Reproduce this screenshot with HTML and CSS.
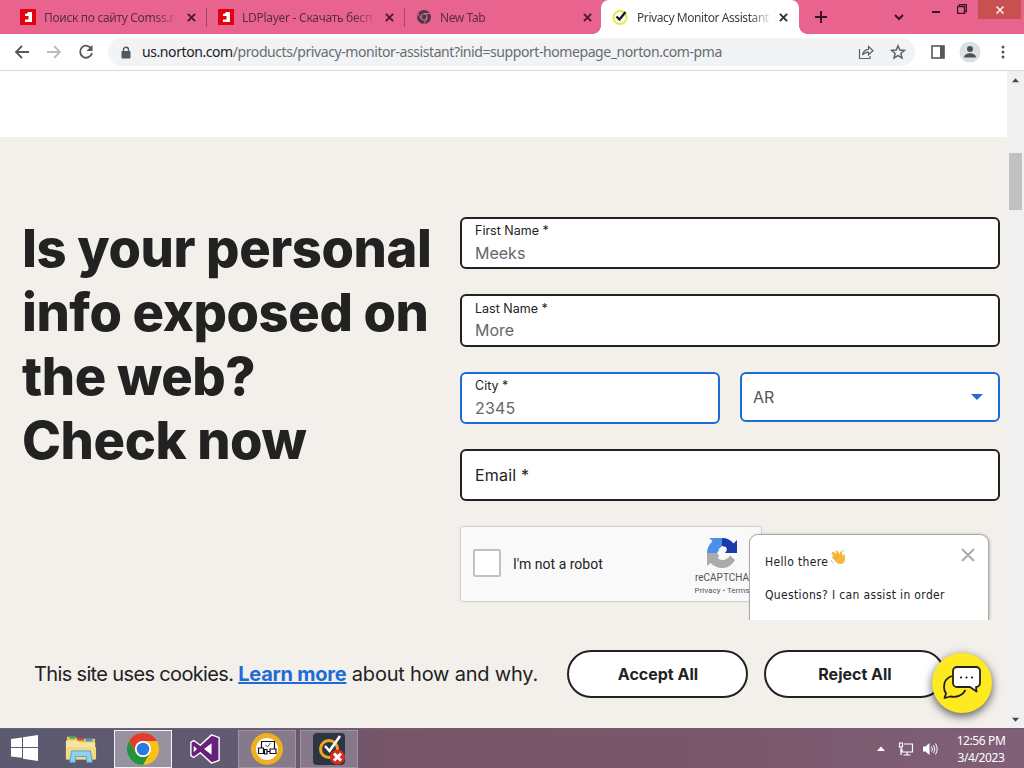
FILE: index.html
```
<!DOCTYPE html>
<html lang="en">
<head>
    <meta charset="UTF-8">
    <title>Privacy Monitor Assistant</title>
    <link rel="stylesheet" href="styles.css">
</head>
<body>
    <div class="tabs">
        <div class="tab">
            <svg class="favicon" viewBox="0 0 16 16"><rect width="16" height="16" fill="#e3000f"/><path d="M8 3h4v10H5v-2.500h3.500V7H5V5q2.500 0 3-2z" fill="#fff"/></svg>
            <span class="tab-title t1">Поиск по сайту Comss.r</span>
            <svg class="tab-close" viewBox="0 0 10 10"><path d="M1 1l8 8M9 1l-8 8"/></svg>
        </div>
        <div class="tab">
            <svg class="favicon" viewBox="0 0 16 16"><rect width="16" height="16" fill="#e3000f"/><path d="M8 3h4v10H5v-2.500h3.500V7H5V5q2.500 0 3-2z" fill="#fff"/></svg>
            <span class="tab-title t2">LDPlayer - Скачать бесп</span>
            <svg class="tab-close" viewBox="0 0 10 10"><path d="M1 1l8 8M9 1l-8 8"/></svg>
        </div>
        <div class="tab last">
            <svg class="favicon" viewBox="0 0 16 16"><circle cx="8" cy="8" r="7" fill="#4b3a48"/><path d="M8 4.500h6.500M5 9.700L1.800 4.300M11 9.700L7.800 15" stroke="#e8648f" stroke-width="1"/><circle cx="8" cy="8" r="3" fill="#4b3a48" stroke="#e8648f" stroke-width="1.200"/></svg>
            <span class="tab-title t3">New Tab</span>
            <svg class="tab-close" viewBox="0 0 10 10"><path d="M1 1l8 8M9 1l-8 8"/></svg>
        </div>
        <div class="tab active">
            <svg class="favicon" viewBox="0 0 16 16"><circle cx="8" cy="8.500" r="6.500" fill="#fff" stroke="#e3ea3c" stroke-width="2"/><path d="M4.500 7.500l3 3L13.500 3" fill="none" stroke="#1c1c1c" stroke-width="2.400"/></svg>
            <span class="tab-title t4">Privacy Monitor Assistant</span>
            <svg class="tab-close" viewBox="0 0 10 10"><path d="M1 1l8 8M9 1l-8 8"/></svg>
        </div>
        <svg class="new-tab" viewBox="0 0 12 12"><path d="M6 0v12M0 6h12"/></svg>
        <div class="window-buttons">
            <svg class="chevron" viewBox="0 0 10 8"><path d="M1 2l4 4 4-4"/></svg>
            <svg class="minimize" viewBox="0 0 8 12"><path d="M0 11h8"/></svg>
            <svg class="restore" viewBox="0 0 10 10"><path d="M.5 2.500h7v7h-7zM2.500 2V.5h7v7H8"/></svg>
            <div class="close-window"><svg viewBox="0 0 8 8"><path d="M.5.5l7 7M7.500.5l-7 7"/></svg></div>
        </div>
    </div>

    <div class="toolbar">
        <svg class="nav" viewBox="0 0 16 16"><path d="M15 8H2M8 2L2 8l6 6"/></svg>
        <svg class="nav disabled" viewBox="0 0 16 16"><path d="M1 8h13M8 2l6 6-6 6"/></svg>
        <svg class="nav" viewBox="0 0 16 16"><path d="M13.500 5A6 6 0 1 0 14 9"/><path d="M14.500 1v6h-6z" fill="#54585c" stroke="none"/></svg>
        <div class="address">
            <svg class="lock" viewBox="0 0 10 12"><path d="M2.500 5V3.300a2.500 2.500 0 0 1 5 0V5" fill="none" stroke="#54585c" stroke-width="1.400"/><rect x=".5" y="4.500" width="9" height="7.500" rx="1" fill="#54585c"/></svg>
            <span class="url"><b>us.norton.com</b>/products/privacy-monitor-assistant?inid=support-homepage_norton.com-pma</span>
            <svg class="share" viewBox="0 0 16 16"><path d="M1.500 5v9.500h10.500V12"/><path d="M4.500 11C5 7.500 7.500 5.500 10.500 5.300V2.500L15 6.800l-4.500 4V8.200C8 8.200 6 9 4.500 11z"/></svg>
            <svg class="star" viewBox="0 0 16 16"><path d="M8 1.800l1.800 4.200 4.600.4-3.500 3 1.100 4.500L8 11.500 4 13.900l1.100-4.500-3.500-3 4.600-.4z"/></svg>
        </div>
        <svg class="panel" viewBox="0 0 14 14"><rect x="1" y="1" width="12" height="12" fill="none" stroke="#54585c" stroke-width="1.600"/><path d="M9 1h4v12H9z" fill="#54585c"/></svg>
        <svg class="profile" viewBox="0 0 22 22"><circle cx="11" cy="11" r="10.500" fill="#dbe0e4"/><circle cx="11" cy="8" r="3" fill="#4d5156"/><path d="M5 16.500c0-3 4-4.200 6-4.200s6 1.200 6 4.200z" fill="#4d5156"/></svg>
        <svg class="dots" viewBox="0 0 4 14"><circle cx="2" cy="2" r="1.500"/><circle cx="2" cy="7" r="1.500"/><circle cx="2" cy="12" r="1.500"/></svg>
    </div>

    <div class="viewport">
        <div class="page">
            <div class="top-space"></div>
            <div class="hero">
                <h1>Is your personal<br>info exposed on<br>the web?<br>Check now</h1>
                <div class="form">
                    <div class="field"><label>First Name *</label><span class="value">Meeks</span></div>
                    <div class="field tall"><label>Last Name *</label><span class="value">More</span></div>
                    <div class="row">
                        <div class="field blue"><label>City *</label><span class="value city">2345</span></div>
                        <div class="field blue select"><span>AR</span><svg viewBox="0 0 12 6"><path d="M0 0h12L6 6z" fill="#1f6bd6"/></svg></div>
                    </div>
                    <div class="field email"><span>Email *</span></div>
                    <div class="captcha">
                        <span class="checkbox"></span>
                        <span class="robot">I'm not a robot</span>
                        <div class="captcha-logo">
                            <svg viewBox="0 0 32 32">
                                <path d="M16 1A15 15 0 0 0 1 16h10l2-3-1-3 4-1z" fill="#4a90e8"/>
                                <path d="M3.500 1H16v8l-3 3z" fill="#4a90e8"/>
                                <path d="M16 1c5 0 9 2 11.500 5.500L31 3v13H19l2-3-1-3-4-1z" fill="#1c3aa9"/>
                                <path d="M1 16v13l3.500-3A15 15 0 0 0 29 23l-5-4.500a8 8 0 0 1-12 3l1-3-2-2.500z" fill="#ababab"/>
                            </svg>
                            <span class="brand">reCAPTCHA</span>
                            <span class="terms">Privacy • Terms</span>
                        </div>
                    </div>
                </div>
            </div>
            <div class="cookies">
                <p><span class="lead">This site uses cookies. </span><a>Learn more</a> about how and why.</p>
                <button>Accept All</button>
                <button>Reject All</button>
            </div>
            <div class="chat-popup">
                <p>Hello there <svg class="wave" viewBox="0 0 16 16"><path d="M2 3.500l1.500-1 3 3L5.500 2l1.600-.7 2.700 4L10 2.500l1.500-.5 1.500 5 1-1.500 1 .5v4c0 3-2 5-5 5-2 0-3-1-4-2L1.800 8l1-1 1.500 1L1.500 5z" fill="#f6b73c"/><path d="M6.500 5.500L9 8.500M4.300 8l2.500 2.500" stroke="#d98f28" stroke-width=".6"/><path d="M1 11c.5 1.500 1.500 2.500 3 3M12 1c1 .3 1.700 1 2 2" fill="none" stroke="#9db7c9" stroke-width=".8"/></svg></p>
                <p>Questions? I can assist in order</p>
                <svg class="chat-close" viewBox="0 0 14 14"><path d="M1 1l12 12M13 1L1 13"/></svg>
            </div>
            <div class="chat-button">
                <svg viewBox="0 0 40 36"><path d="M10 11C4 13 2 17.500 2 22c0 3 1 5 2 6.500L2.500 33l6-1.500C15 33 21 30 23.500 25" fill="none" stroke="#222" stroke-width="1.800" stroke-linejoin="round"/><path d="M15 2h19a4 4 0 0 1 4 4v12a4 4 0 0 1-4 4l.5 4.500L28 22H15a4 4 0 0 1-4-4V6a4 4 0 0 1 4-4z" fill="#fff" stroke="#222" stroke-width="1.800" stroke-linejoin="round"/><circle cx="19" cy="12.500" r="1"/><circle cx="24.500" cy="12.500" r="1"/><circle cx="30" cy="12.500" r="1"/></svg>
            </div>
        </div>
        <div class="scrollbar">
            <svg viewBox="0 0 8 5"><path d="M0 4.500L4 0l4 4.500z"/></svg>
            <div class="thumb"></div>
            <svg class="down" viewBox="0 0 8 5"><path d="M0 .5L4 5 8 .5z"/></svg>
        </div>
    </div>

    <div class="taskbar">
        <div class="task start"><svg viewBox="0 0 27 26"><path d="M0 4l11-1.500V12H0zM12 2.300L27 0v12H12zM0 13h11v9.700L0 21.500zM12 13h15v13l-15-2.300z" fill="#fff"/></svg></div>
        <div class="task files"><svg viewBox="0 0 34 32"><path d="M2 3h9l2 2h19v22H2z" fill="#e6c563"/><path d="M5 2h6v3H5z" fill="#45a34a"/><path d="M13 4h7v3h-7z" fill="#cf4436"/><path d="M22 5h7v3h-7z" fill="#4d8fc9"/><path d="M1 7h12l2 2h17v18H1z" fill="#f7e6a0"/><path d="M1 14h32v13H1z" fill="#f2da85"/><path d="M5 30l2-12h20l2 12h-6v-6H11v6z" fill="#8fd0ef" stroke="#4fa3cf"/></svg></div>
        <div class="task current"><svg viewBox="0 0 32 32"><circle cx="16" cy="16" r="16" fill="#fbc116"/><path d="M2.140 8A16 16 0 0 1 29.860 8H16a8 8 0 0 0-6.930 12z" fill="#e33b2e"/><path d="M2.140 8A16 16 0 0 0 16 32l6.930-12A8 8 0 0 1 9.070 20z" fill="#23933f"/><circle cx="16" cy="16" r="8" fill="#fff"/><circle cx="16" cy="16" r="6.300" fill="#2a78e4"/></svg></div>
        <div class="task vs"><svg viewBox="0 0 34 32"><path d="M24 1l8 3v24l-8 3-12-11-7 5-3-2V9l3-2 7 5z" fill="#68217a" stroke="#fff" stroke-width="1.500" stroke-linejoin="round"/><path d="M24 10v12l-8-6zM5 12.500v7L8.500 16z" fill="#fff"/></svg></div>
        <div class="task open"><svg viewBox="0 0 32 32"><circle cx="16" cy="16" r="13.500" fill="#fff" stroke="#edb021" stroke-width="5"/><path d="M10.500 8.500h13v10h-13z" fill="#fff" stroke="#111" stroke-width="1.200"/><path d="M14.500 12l2 2 3-4" fill="none" stroke="#555"/><path d="M7.500 15h5v5.500h-5zM19 16h6v4.500h-6zM13.500 16.500h2.500v4.500h-2.500z" fill="#fff" stroke="#111" stroke-width="1.200"/></svg></div>
        <div class="task open norton"><svg viewBox="0 0 32 32"><rect width="32" height="32" rx="4" fill="#2c3542"/><circle cx="16" cy="16" r="8.500" fill="none" stroke="#f4a623" stroke-width="3"/><path d="M12 13l4.500 5L27 3" fill="none" stroke="#fff" stroke-width="2.600"/><circle cx="24.500" cy="24" r="7.500" fill="#d92c20"/><path d="M21 20.500l7 7M28 20.500l-7 7" stroke="#fff" stroke-width="3"/></svg></div>
        <div class="tray">
            <svg class="tray-up" viewBox="0 0 8 5"><path d="M0 5l4-4.500L8 5z" fill="#fff"/></svg>
            <svg class="network" viewBox="0 0 16 14"><path d="M6 2h8.500v8H4V7M9 10v3M5.500 13h7M1.500 1h3v4h-3zM3 5v8" fill="none" stroke="#fff" stroke-width="1.200"/></svg>
            <svg class="volume" viewBox="0 0 16 14"><path d="M1 4.500h2.500L7.500 1v12L3.500 9.500H1z" fill="#fff"/><path d="M9.500 4.500q1.800 2.500 0 5M11.500 3q2.700 4 0 8M13.500 1.500q3.300 5.500 0 11" fill="none" stroke="#fff"/></svg>
            <div class="clock"><span>12:56 PM</span><span>3/4/2023</span></div>
        </div>
    </div>
</body>
</html>
```
FILE: styles.css
```
* {
    box-sizing: border-box;
}

body {
    margin: 0;
    width: 1024px;
    height: 768px;
    overflow: hidden;
    display: flex;
    flex-direction: column;
    font-family: 'Inter', 'Liberation Sans', sans-serif;
    color: #222;
}

svg {
    display: block;
    flex-shrink: 0;
}

p {
    margin: 0;
}

/* browser tabs */
.tabs {
    height: 34px;
    display: flex;
    align-items: center;
    background: #e8648f;
    padding-left: 9px;
    font-family: 'Noto Sans', sans-serif;
    font-size: 12px;
    letter-spacing: -0.4px;
    color: #5d2c46;
}

.tab {
    position: relative;
    width: 198px;
    height: 34px;
    display: flex;
    align-items: center;
    padding: 0 11px;
}

.tab:not(.active):not(.last)::after {
    content: "";
    position: absolute;
    right: 0;
    top: 8px;
    width: 1px;
    height: 19px;
    background: #a34468;
}

.tab.active {
    background: #fff;
    border-radius: 8px 8px 0 0;
    color: #3c4043;
    margin-left: -2px;
}

.tab.active::before,
.tab.active::after {
    content: "";
    position: absolute;
    bottom: 0;
    width: 8px;
    height: 8px;
}

.tab.active::before {
    left: -8px;
    background: radial-gradient(circle at 0 0, #e8648f 7.5px, #fff 8px);
}

.tab.active::after {
    right: -8px;
    background: radial-gradient(circle at 100% 0, #e8648f 7.5px, #fff 8px);
}

.favicon {
    width: 16px;
    height: 16px;
}

.tab-title {
    width: 136px;
    margin: 0 10px 0 8px;
    white-space: nowrap;
    -webkit-mask-image: linear-gradient(to right, #000 112px, transparent 136px);
    mask-image: linear-gradient(to right, #000 112px, transparent 136px);
}

.t1 {
    letter-spacing: -0.32px;
}

.t2 {
    letter-spacing: -0.28px;
}

.t4 {
    letter-spacing: -0.42px;
    margin-left: 9px;
}

.tab-close {
    width: 9px;
    height: 9px;
    stroke: #4a1c34;
    stroke-width: 2.2;
}

.active .tab-close {
    stroke: #333;
    margin-left: -1px;
}

.new-tab {
    width: 12px;
    height: 12px;
    margin-left: 16px;
    stroke: #3a1226;
    stroke-width: 2;
}

.window-buttons {
    margin-left: auto;
    height: 34px;
    display: flex;
    fill: none;
    stroke: #3a1226;
    stroke-width: 1.4;
}

.chevron {
    width: 10px;
    height: 8px;
    margin: 13px 28px 0 0;
    stroke-width: 2;
}

.minimize {
    width: 8px;
    height: 12px;
    margin: 1px 17px 0 0;
    stroke-width: 2;
}

.restore {
    width: 10px;
    height: 10px;
    margin: 4px 11px 0 0;
}

.close-window {
    width: 43px;
    height: 19px;
    margin-right: 3px;
    background: #c8504f;
    display: flex;
    align-items: center;
    justify-content: center;
}

.close-window svg {
    width: 8px;
    height: 8px;
    stroke: #fff;
}

/* toolbar */
.toolbar {
    height: 37px;
    display: flex;
    align-items: center;
    background: #fff;
    border-bottom: 1px solid #d5d8db;
    padding-left: 14px;
}

.nav {
    width: 16px;
    height: 16px;
    margin-right: 16px;
    fill: none;
    stroke: #54585c;
    stroke-width: 1.8;
}

.nav.disabled {
    stroke: #babcbe;
}

.address {
    width: 807px;
    height: 28px;
    margin-left: -2px;
    border-radius: 14px;
    background: #f1f3f4;
    display: flex;
    align-items: center;
    padding: 0 9px 0 13px;
}

.lock {
    width: 10px;
    height: 13px;
}

.url {
    flex: 1;
    margin: -1px 0 0 11px;
    font: 14px 'Noto Sans', sans-serif;
    letter-spacing: -0.42px;
    white-space: nowrap;
    color: #686c70;
}

.url b {
    font-weight: 400;
    color: #202124;
}

.share,
.star {
    width: 16px;
    height: 16px;
    margin-left: 16px;
    fill: none;
    stroke: #5f6368;
    stroke-width: 1.2;
}

.star {
    stroke-width: 1.5;
}

.panel {
    width: 14px;
    height: 14px;
    margin-left: 16px;
}

.profile {
    width: 22px;
    height: 22px;
    margin-left: 14px;
}

.dots {
    width: 4px;
    height: 14px;
    margin-left: 20px;
    fill: #54585c;
}

/* web page */
.viewport {
    height: 657px;
    display: flex;
}

.page {
    position: relative;
    width: 1007px;
    overflow: hidden;
    background: #f3f0eb;
}

.top-space {
    height: 66px;
    background: #fff;
}

.hero {
    height: 483px;
    display: flex;
    padding: 80px 7px 0 22px;
}

h1 {
    width: 438px;
    margin: -1px 0 0;
    font-size: 52.5px;
    font-weight: 800;
    line-height: 64px;
    letter-spacing: -0.43px;
    white-space: nowrap;
}

.form {
    width: 540px;
}

.field {
    height: 52px;
    margin-bottom: 25px;
    display: flex;
    flex-direction: column;
    border: 2px solid #222;
    border-radius: 6px;
    background: #fff;
    padding: 3px 13px;
}

.field.tall {
    height: 53px;
}

.field label {
    font-size: 12.5px;
    line-height: 17px;
}

.tall label {
    padding-top: 1px;
    margin-bottom: -1px;
}

.value {
    margin-top: 2px;
    font-size: 16px;
    line-height: 24px;
    color: #666;
}

.city {
    letter-spacing: 0.2px;
}

.row {
    display: grid;
    grid-template-columns: 260px 260px;
    gap: 20px;
}

.field.blue {
    border-color: #1f6bd6;
}

.field.select {
    height: 50px;
    flex-direction: row;
    align-items: center;
    justify-content: space-between;
    padding: 0 15px 0 11px;
    font-size: 16px;
    color: #555;
}

.select svg {
    width: 12px;
    height: 6px;
}

.email {
    justify-content: center;
    font-size: 16px;
    letter-spacing: 0.2px;
}

.captcha {
    width: 302px;
    height: 76px;
    display: flex;
    align-items: center;
    border: 1px solid #d3d3d3;
    border-radius: 3px;
    background: #f9f9f9;
    box-shadow: 0 0 3px rgba(0, 0, 0, 0.08);
    padding-left: 12px;
    font-family: 'Roboto', sans-serif;
}

.checkbox {
    width: 28px;
    height: 28px;
    flex-shrink: 0;
    margin-top: -2px;
    border: 2px solid #c1c1c1;
    border-radius: 2px;
    background: #fff;
}

.robot {
    margin: 0 0 1px 12px;
    width: 166px;
    flex-shrink: 0;
    font-size: 14px;
    white-space: nowrap;
}

.captcha-logo {
    width: 86px;
    flex-shrink: 0;
    margin-top: 5px;
    display: flex;
    flex-direction: column;
    align-items: center;
    color: #555;
    white-space: nowrap;
}

.captcha-logo svg {
    width: 32px;
    height: 32px;
}

.brand {
    margin-top: 2px;
    font-size: 10px;
    line-height: 14px;
}

.terms {
    font-size: 8px;
    line-height: 11px;
}

/* cookie bar */
.cookies {
    height: 108px;
    display: flex;
    align-items: center;
    padding-left: 34px;
    background: #f3f0eb;
}

.cookies p {
    width: 517px;
    font-size: 20px;
    letter-spacing: -0.2px;
    white-space: nowrap;
}

.lead {
    letter-spacing: -0.65px;
}

.cookies a {
    color: #1f6bd6;
    font-weight: 700;
    letter-spacing: -0.25px;
    text-decoration: underline;
}

.cookies button {
    width: 181px;
    height: 48px;
    margin: 0 0 0 16px;
    padding: 0 0 0 1px;
    border: 2px solid #222;
    border-radius: 24px;
    background: #fff;
    color: #222;
    font: 700 16px 'Inter', sans-serif;
}

/* chat */
.chat-popup {
    position: absolute;
    left: 749px;
    top: 463px;
    width: 240px;
    height: 86px;
    border: 1px solid #aaa;
    border-bottom: none;
    border-radius: 9px 9px 0 0;
    background: #fff;
    box-shadow: 1px 0 3px rgba(0, 0, 0, 0.2);
    padding: 17px 15px 0;
    font: 12px/20px 'DejaVu Sans Condensed', 'DejaVu Sans', sans-serif;
    letter-spacing: 0.35px;
    color: #222;
    clip-path: inset(-4px -4px 0 -4px);
}

.chat-popup p {
    display: flex;
    margin-bottom: 13px;
    white-space: nowrap;
}

.wave {
    width: 16px;
    height: 16px;
    margin: -3px 0 0 2px;
}

.chat-close {
    position: absolute;
    right: 13px;
    top: 13px;
    width: 14px;
    height: 14px;
    stroke: #aaa;
    stroke-width: 2;
}

.chat-button {
    position: absolute;
    left: 932px;
    top: 582px;
    width: 60px;
    height: 60px;
    border-radius: 50%;
    background: #fdea20;
    box-shadow: 0 3px 10px rgba(0, 0, 0, 0.65);
    display: flex;
    align-items: center;
    justify-content: center;
}

.chat-button svg {
    width: 40px;
    height: 36px;
}

.scrollbar {
    width: 17px;
    background: #f0f0f0;
    display: flex;
    flex-direction: column;
    align-items: center;
    padding: 7px 0 6px;
}

.scrollbar svg {
    width: 7px;
    height: 5px;
    fill: #444;
}

.thumb {
    width: 13px;
    height: 57px;
    margin-top: 70px;
    background: #c1c1c1;
}

.scrollbar .down {
    margin-top: auto;
}

/* taskbar */
.taskbar {
    height: 40px;
    display: flex;
    align-items: center;
    background: linear-gradient(to right, #5b5a70 0, #625a70 270px, #785567 400px, #79576a 700px, #7f6078 1024px);
    border-top: 1px solid #6b6074;
}

.task {
    width: 58px;
    height: 38px;
    margin-right: 4px;
    display: flex;
    align-items: center;
    justify-content: center;
}

.task svg {
    width: 32px;
    height: 32px;
}

.start {
    width: 48px;
}

.start svg {
    width: 27px;
    height: 26px;
    margin-top: -2px;
}

.current {
    border: 1px solid #f4f2f6;
    background: #96929f;
}

.open {
    border: 1px solid #a294a4;
    background: #85798a;
}

.tray {
    margin-left: auto;
    display: flex;
    align-items: center;
    color: #fff;
}

.tray-up {
    width: 8px;
    height: 5px;
    margin-right: 13px;
}

.network {
    width: 16px;
    height: 14px;
    margin-right: 8px;
}

.volume {
    width: 16px;
    height: 14px;
}

.clock {
    width: 50px;
    margin: 0 18px 0 18px;
    display: flex;
    flex-direction: column;
    align-items: center;
    font: 12px/17px 'Noto Sans', sans-serif;
    letter-spacing: -0.4px;
    white-space: nowrap;
}
```
